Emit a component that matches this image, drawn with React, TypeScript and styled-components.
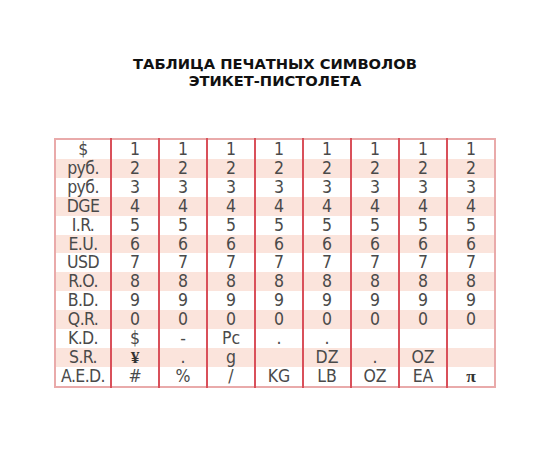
import * as React from 'react';
import styled, { createGlobalStyle } from 'styled-components';

const GlobalStyle = createGlobalStyle`
  html, body {
    margin: 0;
    padding: 0;
    background: #ffffff;
  }
`;

const Page = styled.div`
  width: 550px;
  height: 450px;
  display: flex;
  flex-direction: column;
  align-items: center;
  padding-top: 55px;
  box-sizing: border-box;
`;

const Title = styled.h1`
  margin: 0;
  font-family: "DejaVu Sans", Verdana, sans-serif;
  font-weight: bold;
  font-size: 14.7px;
  line-height: 17px;
  color: #111;
  text-align: center;
`;

const Table = styled.table`
  margin-top: 49px;
  width: 442px;
  border-collapse: collapse;
  border: 2px solid #e9aaaa;
  table-layout: fixed;
  font-family: "DejaVu Sans Condensed", "Roboto", sans-serif;
  font-stretch: condensed;
  color: #4a4a4a;
`;

const Row = styled.tr<{ $shade: boolean }>`
  height: 18.9px;
  background: ${({ $shade }) => ($shade ? '#fbe4dc' : '#ffffff')};
`;

const Cell = styled.td<{ $label?: boolean }>`
  padding: 0;
  text-align: center;
  font-size: 17.5px;
  line-height: 18.9px;
  border-left: ${({ $label }) => ($label ? 'none' : '2px solid #d9505a')};
  width: ${({ $label }) => ($label ? '54px' : 'auto')};
  white-space: nowrap;
  letter-spacing: ${({ $label }) => ($label ? '-0.6px' : '0')};
`;

const Glyph = styled.span`
  font-family: "Liberation Serif", "Times New Roman", serif;
  font-weight: bold;
  color: #333;
`;

const digits = (d: string) => Array(8).fill(d);

const rows: { label: string; values: React.ReactNode[] }[] = [
  { label: '$', values: digits('1') },
  { label: 'руб.', values: digits('2') },
  { label: 'руб.', values: digits('3') },
  { label: 'DGE', values: digits('4') },
  { label: 'I.R.', values: digits('5') },
  { label: 'E.U.', values: digits('6') },
  { label: 'USD', values: digits('7') },
  { label: 'R.O.', values: digits('8') },
  { label: 'B.D.', values: digits('9') },
  { label: 'Q.R.', values: digits('0') },
  { label: 'K.D.', values: ['$', '-', 'Pc', '.', '.', '', '', ''] },
  { label: 'S.R.', values: [<Glyph key="y">¥</Glyph>, '.', 'g', '', 'DZ', '.', 'OZ', ''] },
  { label: 'A.E.D.', values: ['#', '%', '/', 'KG', 'LB', 'OZ', 'EA', <Glyph key="p">π</Glyph>] },
];

export default function App() {
  return (
    <>
      <GlobalStyle />
      <Page>
        <Title>
          ТАБЛИЦА ПЕЧАТНЫХ СИМВОЛОВ
          <br />
          ЭТИКЕТ-ПИСТОЛЕТА
        </Title>
        <Table>
          <tbody>
            {rows.map((r, i) => (
              <Row key={i} $shade={i % 2 === 1}>
                <Cell $label>{r.label}</Cell>
                {r.values.map((v, j) => (
                  <Cell key={j}>{v}</Cell>
                ))}
              </Row>
            ))}
          </tbody>
        </Table>
      </Page>
    </>
  );
}
